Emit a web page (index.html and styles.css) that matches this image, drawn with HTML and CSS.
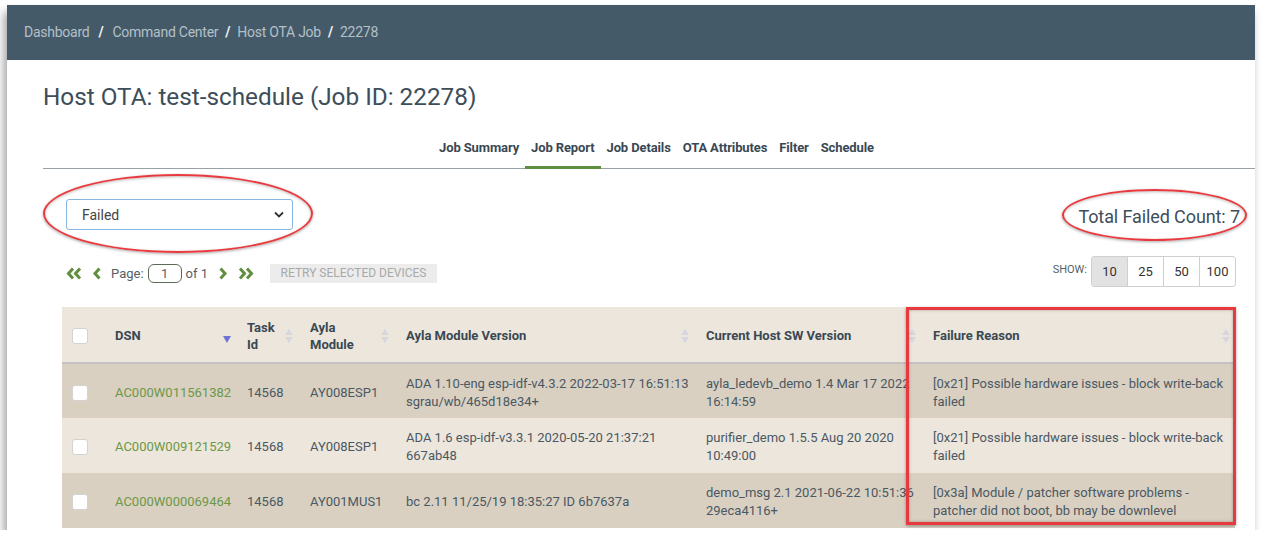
FILE: index.html
```html
<!DOCTYPE html>
<html lang="en">
<head>
<meta charset="utf-8">
<title>Host OTA Job 22278</title>
<link rel="stylesheet" href="styles.css">
</head>
<body>
<div class="frame">
  <header class="topbar">
    <nav class="crumbs">
      <span>Dashboard</span><span class="sep first">/</span><span>Command Center</span><span class="sep">/</span><span>Host OTA Job</span><span class="sep">/</span><span>22278</span>
    </nav>
  </header>
  <main class="content">
    <h1 class="title">Host OTA: test-schedule (Job ID: 22278)</h1>
    <div class="tabs">
      <span class="tab">Job Summary</span>
      <span class="tab active">Job Report</span>
      <span class="tab">Job Details</span>
      <span class="tab">OTA Attributes</span>
      <span class="tab">Filter</span>
      <span class="tab">Schedule</span>
    </div>
    <section class="report">
      <div class="toolbar">
        <div class="select-wrap">
          <div class="select">
            <span>Failed</span>
            <svg class="caret" width="10" height="7" viewBox="0 0 10 7"><path d="M1 1.5 L5 5.5 L9 1.5" fill="none" stroke="#333" stroke-width="1.8"/></svg>
          </div>
          <span class="ring ring-select"></span>
        </div>
        <div class="total-wrap">
          <span class="total">Total Failed Count: 7</span>
          <span class="ring ring-total"></span>
        </div>
      </div>
      <div class="pager-row">
        <div class="pager">
          <svg class="nav-icon" width="17" height="13" viewBox="0 0 17 13"><path d="M7 1.5 L2.5 6.5 L7 11.5 M14 1.5 L9.5 6.5 L14 11.5" fill="none" stroke="#5f8f3f" stroke-width="3"/></svg>
          <svg class="nav-icon" width="10" height="13" viewBox="0 0 10 13"><path d="M7.5 1.5 L3 6.5 L7.5 11.5" fill="none" stroke="#5f8f3f" stroke-width="3"/></svg>
          <span class="page-label">Page:</span>
          <span class="page-input">1</span>
          <span class="page-of">of 1</span>
          <svg class="nav-icon" width="10" height="13" viewBox="0 0 10 13"><path d="M2.5 1.5 L7 6.5 L2.5 11.5" fill="none" stroke="#5f8f3f" stroke-width="3"/></svg>
          <svg class="nav-icon" width="17" height="13" viewBox="0 0 17 13"><path d="M3 1.5 L7.5 6.5 L3 11.5 M10 1.5 L14.5 6.5 L10 11.5" fill="none" stroke="#5f8f3f" stroke-width="3"/></svg>
          <span class="retry">RETRY SELECTED DEVICES</span>
        </div>
        <div class="show">
          <span class="show-label">SHOW:</span>
          <div class="show-group">
            <span class="show-btn on">10</span><span class="show-btn">25</span><span class="show-btn">50</span><span class="show-btn">100</span>
          </div>
        </div>
      </div>
      <div class="table-wrap">
        <table class="grid">
          <colgroup>
            <col class="c-check"><col class="c-dsn"><col class="c-task"><col class="c-mod"><col class="c-ver"><col class="c-host"><col class="c-fail">
          </colgroup>
          <thead>
            <tr>
              <th><span class="box"></span></th>
              <th><div class="th"><span>DSN</span><span class="sort-active"></span></div></th>
              <th><div class="th"><span>Task<br>Id</span><span class="sort"></span></div></th>
              <th><div class="th"><span>Ayla<br>Module</span><span class="sort"></span></div></th>
              <th><div class="th"><span>Ayla Module Version</span><span class="sort"></span></div></th>
              <th><div class="th"><span>Current Host SW Version</span><span class="sort"></span></div></th>
              <th><div class="th"><span>Failure Reason</span><span class="sort"></span></div></th>
            </tr>
          </thead>
          <tbody>
            <tr class="dark">
              <td><span class="box"></span></td>
              <td class="dsn">AC000W011561382</td>
              <td>14568</td>
              <td>AY008ESP1</td>
              <td>ADA 1.10-eng esp-idf-v4.3.2 2022-03-17 16:51:13<br>sgrau/wb/465d18e34+</td>
              <td>ayla_ledevb_demo 1.4 Mar 17 2022<br>16:14:59</td>
              <td>[0x21] Possible hardware issues - block write-back<br>failed</td>
            </tr>
            <tr class="light">
              <td><span class="box"></span></td>
              <td class="dsn">AC000W009121529</td>
              <td>14568</td>
              <td>AY008ESP1</td>
              <td>ADA 1.6 esp-idf-v3.3.1 2020-05-20 21:37:21<br>667ab48</td>
              <td>purifier_demo 1.5.5 Aug 20 2020<br>10:49:00</td>
              <td>[0x21] Possible hardware issues - block write-back<br>failed</td>
            </tr>
            <tr class="dark">
              <td><span class="box"></span></td>
              <td class="dsn">AC000W000069464</td>
              <td>14568</td>
              <td>AY001MUS1</td>
              <td>bc 2.11 11/25/19 18:35:27 ID 6b7637a</td>
              <td>demo_msg 2.1 2021-06-22 10:51:36<br>29eca4116+</td>
              <td>[0x3a] Module / patcher software problems -<br>patcher did not boot, bb may be downlevel</td>
            </tr>
          </tbody>
        </table>
        <span class="highlight"></span>
      </div>
    </section>
  </main>
</div>
</body>
</html>
```
FILE: styles.css
```css
* { box-sizing: border-box; }
html, body { margin: 0; padding: 0; background: #ffffff; }
body {
  font-family: Roboto, "Liberation Sans", Arial, sans-serif;
  color: #44535e;
  padding: 5px 10px 0 7px;
}
.frame {
  width: 1248px;
  height: 525px;
  overflow: hidden;
  background: #ffffff;
  box-shadow: -3px 7px 9px rgba(0, 0, 0, 0.38);
}
.topbar {
  height: 55px;
  background: #455a68;
  display: flex;
  align-items: center;
  padding-left: 17px;
  padding-bottom: 2px;
}
.crumbs {
  font-size: 14px;
  letter-spacing: -0.25px;
  color: #b3c0c8;
  display: flex;
  align-items: center;
}
.crumbs .sep {
  color: #f2f4f5;
  font-weight: bold;
  margin: 0 7px 0 7px;
}
.crumbs .sep.first { margin: 0 9px 0 9px; }
.content {
  padding-left: 36px;
}
.title {
  margin: 23px 0 0 0;
  font-size: 24.3px;
  line-height: 28px;
  font-weight: normal;
  color: #3d4e5a;
}
.tabs {
  margin-top: 19px;
  display: flex;
  justify-content: center;
  padding-left: 15px;
  border-bottom: 1px solid #9aa1a6;
}
.tab {
  font-size: 13px;
  font-weight: bold;
  letter-spacing: -0.12px;
  color: #3a4853;
  line-height: 16px;
  padding: 10px 6px 10px;
  border-bottom: 3px solid transparent;
  margin-bottom: -1px;
}
.tab.active {
  border-bottom-color: #5f8f3f;
}
.report {
  padding: 0 20px 0 19px;
}
.toolbar {
  margin-top: 30px;
  display: flex;
  justify-content: space-between;
  align-items: center;
}
.select-wrap {
  position: relative;
  margin-left: 4px;
}
.select {
  width: 227px;
  height: 31px;
  border: 1px solid #86b6e2;
  border-radius: 3px;
  display: flex;
  align-items: center;
  justify-content: space-between;
  padding: 0 8px 0 15px;
  font-size: 14px;
  color: #444;
  background: #fff;
}
.ring {
  position: absolute;
  border: 2.5px solid #e8393e;
  border-radius: 50%;
  box-shadow: 0 1px 3px rgba(0, 0, 0, 0.35), inset 0 1px 3px rgba(0, 0, 0, 0.25);
  pointer-events: none;
}
.ring-select {
  left: -23px;
  top: -25px;
  width: 270px;
  height: 79px;
}
.total-wrap {
  position: relative;
  padding-top: 3px;
}
.total {
  font-size: 18px;
  letter-spacing: -0.1px;
  color: #3d4e5a;
  display: block;
  margin-right: -5px;
}
.ring-total {
  left: -16px;
  top: -14px;
  width: 185px;
  height: 52px;
}
.pager-row {
  margin-top: 26px;
  display: flex;
  justify-content: space-between;
  align-items: center;
  height: 31px;
}
.pager {
  display: flex;
  align-items: center;
  margin-left: 4px;
  margin-top: 3px;
  font-size: 13px;
  color: #555f66;
}
.nav-icon { display: block; margin-right: 9px; }
.page-label { margin-right: 4px; }
.page-input {
  width: 34px;
  height: 19px;
  border: 1px solid #5b6b55;
  border-radius: 6px;
  text-align: center;
  line-height: 17px;
  margin-right: 4px;
}
.page-of { margin-right: 10px; }
.retry {
  margin-left: 7px;
  width: 167px;
  height: 19px;
  background: #ececec;
  color: #a9a9a9;
  font-size: 12px;
  line-height: 19px;
  text-align: center;
}
.show {
  display: flex;
  align-items: center;
  margin-right: -1px;
}
.show-label {
  font-size: 11px;
  color: #555f66;
  margin-right: 4px;
  margin-top: -4px;
}
.show-group {
  display: flex;
  border: 1px solid #cfcfcf;
  border-radius: 3px;
  overflow: hidden;
}
.show-btn {
  width: 36px;
  height: 29px;
  line-height: 29px;
  text-align: center;
  font-size: 13px;
  color: #333;
  border-left: 1px solid #cfcfcf;
}
.show-btn:first-child { border-left: none; width: 35px; }
.show-btn.on { background: #e2e2e2; }
.table-wrap {
  position: relative;
  margin-top: 20px;
}
.grid {
  width: 1173px;
  border-collapse: collapse;
  table-layout: fixed;
  font-size: 13px;
}
.c-check { width: 41px; }
.c-dsn { width: 132px; }
.c-task { width: 63px; }
.c-mod { width: 96px; }
.c-ver { width: 300px; }
.c-host { width: 227px; }
.c-fail { width: 314px; }
thead tr {
  background: #ede6dc;
  border-bottom: 2px solid #c3c2c0;
}
th {
  height: 56px;
  padding: 2px 0 0 12px;
  text-align: left;
  font-weight: bold;
  color: #3a4853;
  line-height: 17px;
}
th:first-child, td:first-child { padding-left: 10px; }
.th {
  display: flex;
  align-items: center;
  justify-content: space-between;
  padding-right: 4px;
}
.sort {
  width: 9px;
  height: 16px;
  display: block;
  position: relative;
}
.sort::before, .sort::after {
  content: "";
  position: absolute;
  left: 0;
  border-left: 4.5px solid transparent;
  border-right: 4.5px solid transparent;
}
.sort::before { top: 1px; border-bottom: 6px solid #d7d6dc; }
.sort::after { bottom: 1px; border-top: 6px solid #d7d6dc; }
.sort-active {
  width: 0;
  height: 0;
  border-left: 4.5px solid transparent;
  border-right: 4.5px solid transparent;
  border-top: 7px solid #6f74d2;
  margin-top: 7px;
}
td {
  height: 55px;
  padding: 3px 0 0 12px;
  color: #4a5863;
  line-height: 18px;
  white-space: nowrap;
  vertical-align: middle;
}
tr.dark { background: #d9d0c2; }
tr.light { background: #ede6dc; }
td.dsn { color: #6c9847; }
.box {
  display: block;
  width: 16px;
  height: 16px;
  background: #ffffff;
  border: 1px solid #d3d3d3;
  border-radius: 3px;
}
.highlight {
  position: absolute;
  left: 844px;
  top: 0;
  width: 330px;
  height: 218px;
  border: 3px solid #e8393e;
  box-shadow: 0 1px 3px rgba(0, 0, 0, 0.35), inset 0 0 3px rgba(0, 0, 0, 0.3);
  pointer-events: none;
}
```
